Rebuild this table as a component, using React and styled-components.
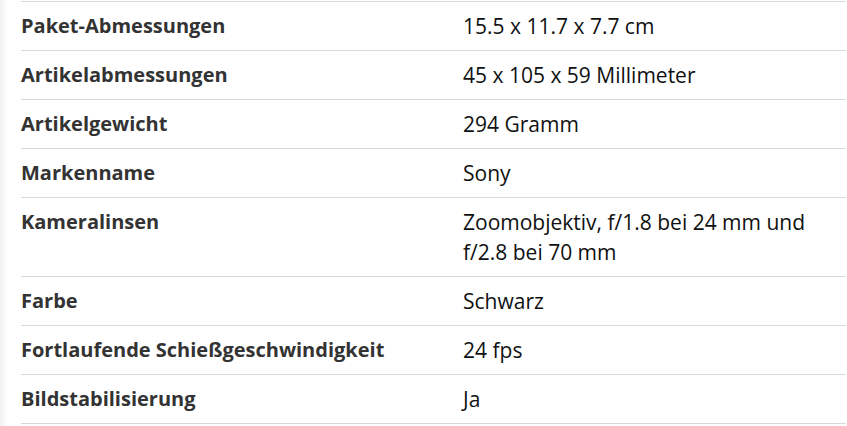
import React from "react";
import styled, { createGlobalStyle } from "styled-components";

const GlobalStyle = createGlobalStyle`
  html, body {
    margin: 0;
    padding: 0;
    background: #fff;
  }
  body {
    font-family: "Open Sans", "Noto Sans", Arial, sans-serif;
  }
`;

const Page = styled.div`
  width: 847px;
  height: 426px;
  box-sizing: border-box;
  padding: 1px 1px 0 21px;
  background: linear-gradient(to right, #f2f2f2 0px, #fafafa 5px, #fff 8px);
  overflow: hidden;
`;

const Table = styled.div`
  display: grid;
  grid-template-columns: 442px 1fr;
  border-top: 1px solid #d5d9d9;
`;

const Cell = styled.div`
  padding: 9px 0;
  line-height: 30px;
  border-bottom: 1px solid #d5d9d9;
  font-size: ${(p) => (p.$label ? "20px" : "21px")};
  color: ${(p) => (p.$label ? "#333" : "#0f1111")};
  font-weight: ${(p) => (p.$label ? 700 : 400)};
  padding-right: ${(p) => (p.$label ? "16px" : "36px")};
`;

const rows = [
  ["Paket-Abmessungen", "15.5 x 11.7 x 7.7 cm"],
  ["Artikelabmessungen", "45 x 105 x 59 Millimeter"],
  ["Artikelgewicht", "294 Gramm"],
  ["Markenname", "Sony"],
  ["Kameralinsen", "Zoomobjektiv, f/1.8 bei 24 mm und f/2.8 bei 70 mm"],
  ["Farbe", "Schwarz"],
  ["Fortlaufende Schießgeschwindigkeit", "24 fps"],
  ["Bildstabilisierung", "Ja"],
];

const App = () => (
  <>
    <GlobalStyle />
    <Page>
      <Table>
        {rows.map(([label, value]) => (
          <React.Fragment key={label}>
            <Cell $label>{label}</Cell>
            <Cell>{value}</Cell>
          </React.Fragment>
        ))}
      </Table>
    </Page>
  </>
);

export default App;
